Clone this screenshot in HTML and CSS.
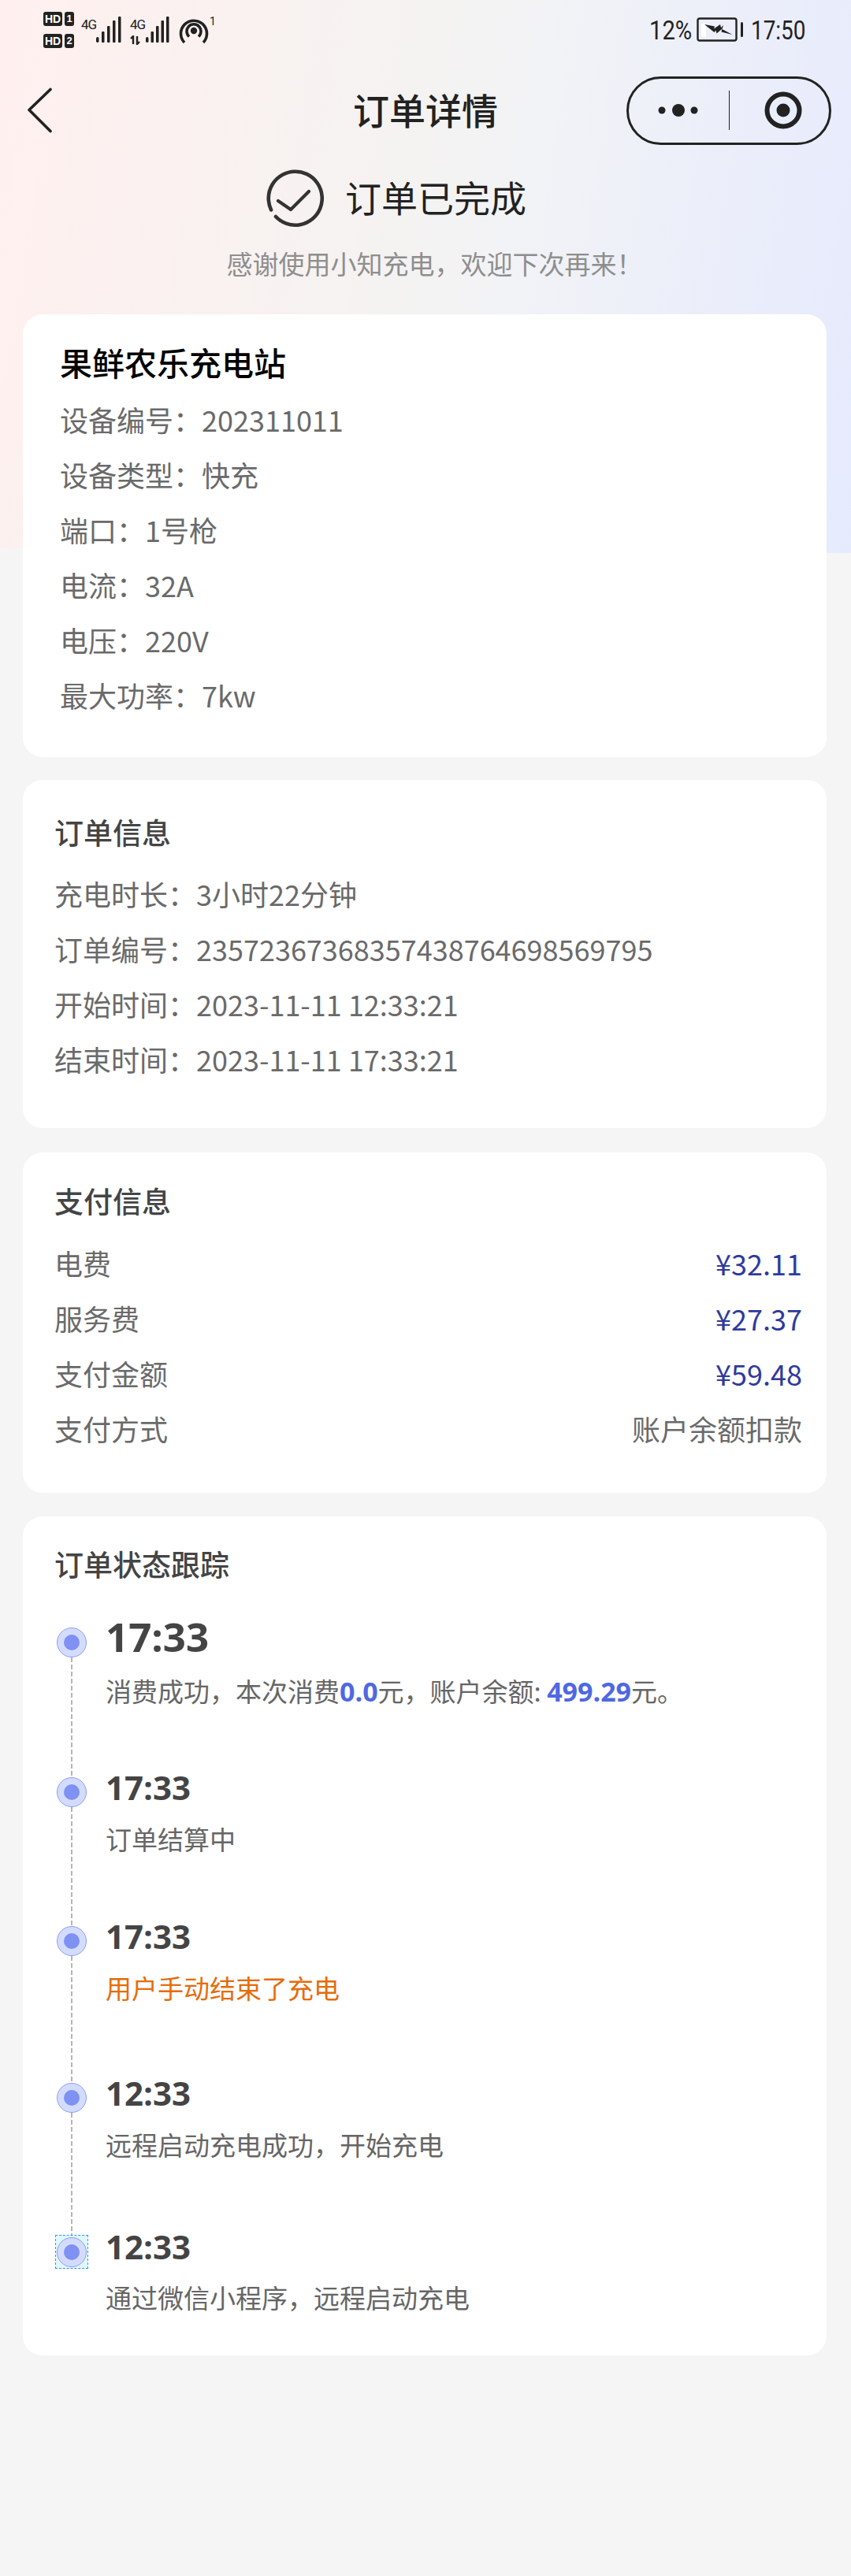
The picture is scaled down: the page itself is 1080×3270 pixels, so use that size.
FILE: index.html
```html
<!DOCTYPE html>
<html lang="zh-CN">
<head>
<meta charset="utf-8">
<title>订单详情</title>
<link rel="stylesheet" href="styles.css">
</head>
<body>
<div class="page">
  <header class="statusbar">
    <div class="sb-left">
      <div class="sims">
        <div class="sim"><span class="hd">HD</span><span class="simno">1</span></div>
        <div class="sim"><span class="hd">HD</span><span class="simno">2</span></div>
      </div>
      <div class="net"><span class="g4">4G</span>
        <svg class="bars" width="32" height="34" viewBox="0 0 32 34"><g fill="#222"><rect x="0" y="26" width="3.5" height="7" rx="1.7"/><rect x="7" y="19" width="3.5" height="14" rx="1"/><rect x="14" y="12" width="3.5" height="21" rx="1"/><rect x="21" y="5" width="3.5" height="28" rx="1"/><rect x="28" y="0" width="3.5" height="33" rx="1"/></g></svg>
      </div>
      <div class="net net2"><span class="g4">4G</span>
        <svg class="arrows" width="16" height="12" viewBox="0 0 16 12"><path d="M4 11V1L1 4M9 1v10l3-3" fill="none" stroke="#222" stroke-width="2.4"/></svg>
        <svg class="bars" width="30" height="34" viewBox="0 0 30 34"><g fill="#222"><rect x="0" y="26" width="3.5" height="7" rx="1.7"/><rect x="6.500" y="19" width="3.500" height="14" rx="1"/><rect x="13" y="12" width="3.500" height="21" rx="1"/><rect x="19.500" y="5" width="3.500" height="28" rx="1"/><rect x="26" y="0" width="3.500" height="33" rx="1"/></g></svg>
      </div>
      <svg class="hotspot" width="38" height="36" viewBox="0 0 38 36"><g fill="none" stroke="#222" stroke-width="3.600"><path d="M7 33A16.500 16.500 0 1 1 31 33" stroke-linecap="butt"/><path d="M13 25.500A9 9 0 1 1 25 25.500"/></g><circle cx="19" cy="18" r="4.200" fill="#222"/></svg>
      <span class="hs-no">1</span>
    </div>
    <div class="sb-right">
      <span class="sb-text sb-pct">12%</span>
      <svg class="battery" width="60" height="32" viewBox="0 0 60 32"><rect x="1.500" y="1.500" width="49" height="28" rx="2.500" fill="none" stroke="#222" stroke-width="2.400"/><rect x="6" y="8" width="6" height="17" rx="1.500" fill="#fff"/><path d="M10 9l13 2.500-1 3 8-5.500 1 4 3-3-1.500 5 13 7-14-3.500 1-4-7 6-1-4-2 2.500z" fill="#222"/><rect x="56" y="6" width="3" height="19" rx="1.500" fill="#222"/></svg>
      <span class="sb-text sb-clock">17:50</span>
    </div>
  </header>

  <nav class="nav">
    <svg class="back" width="32" height="58" viewBox="0 0 32 58"><path d="M29 2.500L2 28.500l27 27" fill="none" stroke="#222" stroke-width="3.600" stroke-linecap="round" stroke-linejoin="round"/></svg>
    <h1 class="nav-title">订单详情</h1>
    <div class="capsule">
      <svg class="cap-more" width="60" height="20" viewBox="0 0 60 20"><g fill="#222"><circle cx="5" cy="10" r="4.500"/><circle cx="26" cy="10" r="8"/><circle cx="46" cy="10" r="4.500"/></g></svg>
      <span class="cap-div"></span>
      <svg class="cap-target" width="48" height="48" viewBox="0 0 48 48"><circle cx="24" cy="24" r="20.500" fill="none" stroke="#222" stroke-width="6"/><circle cx="24" cy="24" r="8.500" fill="#222"/></svg>
    </div>
  </nav>

  <section class="result">
    <div class="result-head">
      <svg class="result-icon" width="76" height="76" viewBox="0 0 76 76"><path d="M7.100 53.400A34 34 0 1 1 13 62" fill="none" stroke="#333" stroke-width="4.600" stroke-linecap="round"/><path d="M16 42l16 11 23-23" fill="none" stroke="#333" stroke-width="4.200" stroke-linecap="round" stroke-linejoin="round"/></svg>
      <span class="result-title">订单已完成</span>
    </div>
    <p class="result-sub">感谢使用小知充电，欢迎下次再来！</p>
  </section>

  <main class="cards">
    <section class="card card-station">
      <h2 class="station-name">果鲜农乐充电站</h2>
      <p class="row">设备编号：202311011</p>
      <p class="row">设备类型：快充</p>
      <p class="row">端口：1号枪</p>
      <p class="row">电流：32A</p>
      <p class="row">电压：220V</p>
      <p class="row">最大功率：7kw</p>
    </section>

    <section class="card card-order">
      <h2 class="card-title">订单信息</h2>
      <p class="row">充电时长：3小时22分钟</p>
      <p class="row">订单编号：23572367368357438764698569795</p>
      <p class="row">开始时间：2023-11-11 12:33:21</p>
      <p class="row">结束时间：2023-11-11 17:33:21</p>
    </section>

    <section class="card card-pay">
      <h2 class="card-title">支付信息</h2>
      <p class="row row-split"><span>电费</span><span class="money">¥32.11</span></p>
      <p class="row row-split"><span>服务费</span><span class="money">¥27.37</span></p>
      <p class="row row-split"><span>支付金额</span><span class="money">¥59.48</span></p>
      <p class="row row-split"><span>支付方式</span><span>账户余额扣款</span></p>
    </section>

    <section class="card card-track">
      <h2 class="card-title">订单状态跟踪</h2>
      <ol class="timeline">
        <li class="tl-item tl-a">
          <div class="tl-mark"><span class="tl-dot"></span><span class="tl-line"></span></div>
          <div class="tl-body"><div class="tl-time tl-time-lg">17:33</div><div class="tl-desc tl-desc-a">消费成功，本次消费<b class="hl">0.0</b>元，账户余额: <b class="hl">499.29</b>元。</div></div>
        </li>
        <li class="tl-item tl-b">
          <div class="tl-mark"><span class="tl-dot"></span><span class="tl-line"></span></div>
          <div class="tl-body"><div class="tl-time">17:33</div><div class="tl-desc">订单结算中</div></div>
        </li>
        <li class="tl-item tl-c">
          <div class="tl-mark"><span class="tl-dot"></span><span class="tl-line"></span></div>
          <div class="tl-body"><div class="tl-time">17:33</div><div class="tl-desc tl-warn">用户手动结束了充电</div></div>
        </li>
        <li class="tl-item tl-d">
          <div class="tl-mark"><span class="tl-dot"></span><span class="tl-line"></span></div>
          <div class="tl-body"><div class="tl-time">12:33</div><div class="tl-desc">远程启动充电成功，开始充电</div></div>
        </li>
        <li class="tl-item tl-e">
          <div class="tl-mark tl-mark-sel"><span class="tl-dot"></span></div>
          <div class="tl-body"><div class="tl-time">12:33</div><div class="tl-desc tl-desc-e">通过微信小程序，远程启动充电</div></div>
        </li>
      </ol>
    </section>
  </main>
</div>
</body>
</html>
```
FILE: styles.css
```css
* { box-sizing: border-box; }
html, body { margin: 0; padding: 0; }
body {
  font-family: "Noto Sans CJK SC", "Noto Sans", sans-serif;
  background: #f5f5f5;
  color: #666;
}
.page {
  min-height: 3270px;
  background-image:
    linear-gradient(to bottom left, transparent 50%, #f5f5f5 50%),
    linear-gradient(100deg, #fff0ee 0%, #f4f3f2 48%, #f2f3f6 58%, #e5eafd 100%);
  background-size: 100% 6px, 100% 702px;
  background-position: 0 696px, 0 0;
  background-repeat: no-repeat;
}
p, h1, h2, ol { margin: 0; padding: 0; }
ol { list-style: none; }

/* status bar */
.statusbar {
  height: 76px;
  padding: 15px 58px 0 55px;
  display: flex;
  justify-content: space-between;
  align-items: flex-start;
  color: #222;
}
.sb-left { display: flex; align-items: flex-start; }
.sims { display: flex; flex-direction: column; gap: 10px; width: 48px; }
.sim { display: flex; gap: 3px; height: 18px; }
.hd {
  width: 24px; height: 18px;
  background: #222; color: #fff;
  border-radius: 3px;
  font: 700 14px/18px "Liberation Sans", sans-serif;
  text-align: center;
}
.simno {
  width: 12px; height: 18px;
  background: #222; color: #fff;
  border-radius: 3px;
  font: 700 13px/18px "Liberation Sans", sans-serif;
  text-align: center;
}
.net { position: relative; display: flex; width: 52px; height: 42px; }
.g4 { font: 400 17px/18px Roboto, sans-serif; color: #222; letter-spacing: -1px; }
.net .g4 { padding-top: 7px; width: 19px; }
.net .bars { margin-top: 6px; }
.net2 { margin-left: 10px; width: 50px; }
.net2 .g4 { width: 20px; }
.arrows { position: absolute; left: 0; top: 30px; }
.hotspot { margin-left: 12px; margin-top: 6px; }
.hs-no { font: 400 14px/16px Roboto, sans-serif; margin: 4px 0 0 1px; }
.sb-right { display: flex; align-items: flex-start; }
.sb-text {
  font: 400 34px/40px Roboto, sans-serif;
  color: #222;
  margin-top: 3px;
  transform: scaleX(.82);
  transform-origin: left center;
  white-space: nowrap;
}
.sb-pct { width: 60px; transform: scaleX(.86); }
.sb-clock { width: 69px; margin-left: 9px; }
.battery { margin-top: 7px; }

/* nav */
.nav {
  height: 128px;
  padding: 0 25px;
  display: grid;
  grid-template-columns: 1fr auto 1fr;
  align-items: center;
}
.back { margin-left: 10px; }
.nav-title { font-size: 46px; font-weight: 500; color: #222; line-height: 60px; padding-bottom: 5px; }
.capsule {
  justify-self: end;
  width: 260px; height: 87px;
  border: 3px solid #222;
  border-radius: 44px;
  display: flex;
  align-items: center;
  padding-left: 37px;
}
.cap-div { width: 1px; height: 50px; background: #222; margin-left: 30px; }
.cap-target { margin-left: 44px; }

/* result */
.result-head {
  height: 94px;
  display: flex;
  align-items: center;
  justify-content: center;
  gap: 25px;
  padding-right: 75px;
}
.result-title { font-size: 46px; line-height: 60px; color: #222; padding-bottom: 4px; }
.result-sub {
  font-size: 33px; line-height: 50px; color: #8e8e8e;
  text-align: center;
  margin-top: 11px;
  padding-left: 23px;
}

/* cards */
.cards {
  display: flex;
  flex-direction: column;
  padding: 40px 31px 0 29px;
}
.card {
  background: #fff;
  border-radius: 25px;
}
.card-station { padding: 35px 31px 44px 47px; }
.card-order { margin-top: 29px; padding: 41px 31px 53px 40px; }
.card-order .card-title { margin-bottom: 18px; }
.card-pay { margin-top: 31px; padding: 36px 31px 47px 40px; }
.card-pay .card-title { margin-bottom: 19px; }
.station-name { font-size: 41px; line-height: 50px; font-weight: 500; color: #000; margin-bottom: 13px; }
.card-title { font-size: 37px; line-height: 50px; font-weight: 500; color: #444; }
.row { font-size: 36px; line-height: 70px; color: #6a6a6a; }
.row-split { display: flex; justify-content: space-between; }
.money { color: #2f3a9e; }

/* timeline */
.card-track { margin-top: 30px; padding: 35px 31px 49px 42px; }
.card-track .card-title { margin-left: -2px; margin-bottom: 56px; }
.tl-item { display: flex; gap: 23px; }
.tl-a { height: 190px; }
.tl-b { height: 189px; }
.tl-c { height: 199px; }
.tl-d { height: 195px; }
.tl-mark { width: 40px; display: flex; flex-direction: column; align-items: center; flex: none; }
.tl-dot {
  width: 38px; height: 38px;
  flex: none;
  border-radius: 50%;
  background: #d3dcfd;
  border: 1px solid #8e9ef0;
  display: flex;
  align-items: center;
  justify-content: center;
}
.tl-dot::before {
  content: "";
  width: 20px; height: 20px;
  border-radius: 50%;
  background: #7f91f3;
}
.tl-line {
  flex: 1;
  width: 2px;
  background: repeating-linear-gradient(to bottom, #b5b5b5 0 6px, transparent 6px 9px);
}
.tl-mark-sel {
  height: 41px;
  margin-top: -1px;
  justify-content: center;
  background: #dff7ff;
  outline: 1px dashed #2f93ff;
}
.tl-time {
  font: 700 42px/38px "Open Sans", "Noto Sans", sans-serif;
  color: #444;
  margin-top: -6px;
}
.tl-time-lg { font-size: 51px; line-height: 30px; margin-top: -4px; }
.tl-desc { font-size: 33px; line-height: 50px; color: #666; margin-top: 21px; }
.tl-desc-a { margin-top: 29px; }
.tl-desc-e { margin-top: 20px; }
.tl-warn { color: #e56c0c; }
.hl { color: #4f68e3; font-family: "Open Sans", "Noto Sans CJK SC", sans-serif; font-weight: 700; font-size: 34px; }
```
